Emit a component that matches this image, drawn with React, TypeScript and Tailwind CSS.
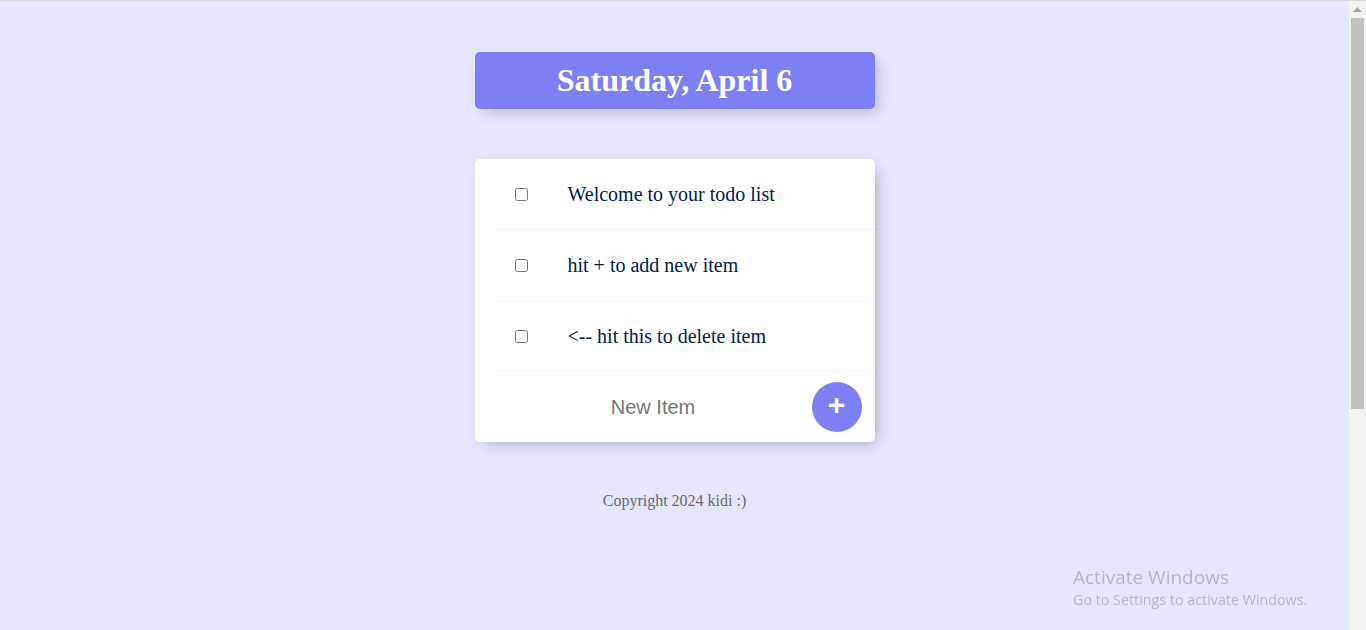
import React, { useState } from 'react';

const items = [
  'Welcome to your todo list',
  'hit + to add new item',
  '<-- hit this to delete item',
];

export default function App() {
  const [newItem, setNewItem] = useState('');

  return (
    <div className="h-[630px] flex border-t border-[#d9d9d9] bg-[#e4e7fc] overflow-hidden">
      <div className="flex-1 font-['Liberation_Serif',serif]">
        <div className="w-[400px] mx-auto pt-[51px]">
          {/* heading */}
          <div className="bg-[#7f7ff4] rounded-[5px] shadow-[5px_5px_15px_-5px_rgba(0,0,0,0.3)] py-[10px] text-center">
            <h1 className="text-[32px] leading-[37px] font-bold text-white">
              Saturday, April 6
            </h1>
          </div>

          {/* list */}
          <div className="mt-[50px] bg-white rounded-[5px] shadow-[5px_5px_15px_-5px_rgba(0,0,0,0.3)]">
            {items.map((item) => (
              <div
                key={item}
                className="ml-[21px] min-h-[71px] flex items-center border-b border-[#f1f1f1]"
              >
                <input type="checkbox" className="m-[19px] w-[13px] h-[13px]" />
                <p className="py-5 pl-[21px] pr-5 text-[20px] leading-[23px] text-[#00204a]">{item}</p>
              </div>
            ))}
            <form
              className="ml-[22px] h-[70px] flex items-center"
              onSubmit={(e) => e.preventDefault()}
            >
              <input
                type="text"
                value={newItem}
                onChange={(e) => setNewItem(e.target.value)}
                placeholder="New Item"
                className="w-[313px] h-[60px] text-center text-[20px] font-['Liberation_Sans',sans-serif] text-[#00204a] placeholder:text-[#757575] outline-none"
              />
              <button
                type="submit"
                className="ml-[2px] w-[50px] h-[50px] rounded-full bg-[#7f7ff4] text-white text-[30px] font-bold leading-none pb-[5px] font-['Liberation_Sans',sans-serif] flex items-center justify-center"
              >
                +
              </button>
            </form>
          </div>

          <footer className="mt-[50px] text-center text-[16px] leading-[18px] text-[#6b6b73]">
            Copyright 2024 kidi :)
          </footer>
        </div>
      </div>

      {/* browser scrollbar */}
      <div className="w-[17px] bg-[#f1f1f1] flex flex-col items-center">
        <div className="h-[17px] flex items-center justify-center">
          <svg width="9" height="5" viewBox="0 0 9 5">
            <path d="M4.5 0 L9 5 L0 5 Z" fill="#a3a3a3" />
          </svg>
        </div>
        <div className="w-[13px] h-[391px] bg-[#c1c1c1]" />
      </div>

      {/* windows watermark */}
      <div className="fixed left-[1073px] top-[565px] text-[#b4b7c4] font-['Open_Sans',sans-serif]">
        <div className="text-[19px] leading-[24px]">Activate Windows</div>
        <div className="text-[14.3px] leading-[22px]">Go to Settings to activate Windows.</div>
      </div>
    </div>
  );
}
